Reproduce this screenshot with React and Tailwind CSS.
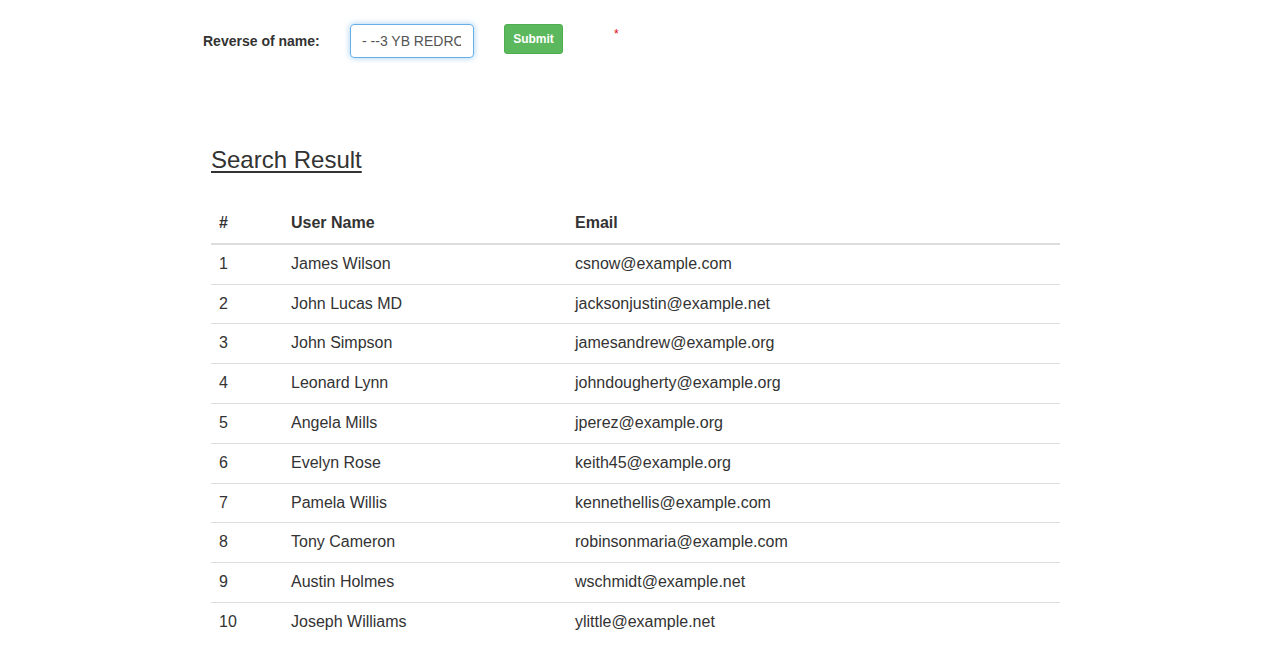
import React from 'react';

const users = [
  ['1', 'James Wilson', 'csnow@example.com'],
  ['2', 'John Lucas MD', 'jacksonjustin@example.net'],
  ['3', 'John Simpson', 'jamesandrew@example.org'],
  ['4', 'Leonard Lynn', 'johndougherty@example.org'],
  ['5', 'Angela Mills', 'jperez@example.org'],
  ['6', 'Evelyn Rose', 'keith45@example.org'],
  ['7', 'Pamela Willis', 'kennethellis@example.com'],
  ['8', 'Tony Cameron', 'robinsonmaria@example.com'],
  ['9', 'Austin Holmes', 'wschmidt@example.net'],
  ['10', 'Joseph Williams', 'ylittle@example.net'],
];

export default function App() {
  return (
    <div className="min-h-[662px] bg-white text-[#333] font-['Liberation_Sans',Arial,sans-serif]">
      {/* Form */}
      <div className="flex items-start pt-6 pl-[203px]">
        <label className="mt-[7px] w-[147px] text-sm font-bold leading-5">Reverse of name:</label>
        <input
          readOnly
          value="- --3 YB REDRODNOL"
          className="h-[34px] w-[124px] rounded border border-[#66afe9] pl-[11px] pr-3 text-sm text-[#555] shadow-[0_0_6px_rgba(102,175,233,0.6)] outline-none"
        />
        <button className="ml-[30px] h-[30px] w-[59px] rounded-[3px] border border-[#4cae4c] bg-[#5cb85c] text-xs font-bold text-white">
          Submit
        </button>
        <span className="ml-[51px] mt-[2px] text-xs leading-4 text-red-600">*</span>
      </div>

      {/* Results */}
      <div className="mx-[211px] w-[849px] pt-[88px]">
        <h3 className="text-[24px] leading-[28px] underline underline-offset-[3px]">Search Result</h3>
        <table className="mt-[30px] w-full border-collapse text-base leading-[22.8px]">
          <thead>
            <tr className="border-b-2 border-[#ddd] text-left">
              <th className="w-[72px] px-2 py-2 font-bold">#</th>
              <th className="w-[284px] px-2 py-2 font-bold">User Name</th>
              <th className="px-2 py-2 font-bold">Email</th>
            </tr>
          </thead>
          <tbody>
            {users.map(([n, name, email], i) => (
              <tr key={n} className={i === 0 ? '' : 'border-t border-[#ddd]'}>
                <td className="px-2 py-2">{n}</td>
                <td className="px-2 py-2">{name}</td>
                <td className="px-2 py-2">{email}</td>
              </tr>
            ))}
          </tbody>
        </table>
      </div>
    </div>
  );
}
